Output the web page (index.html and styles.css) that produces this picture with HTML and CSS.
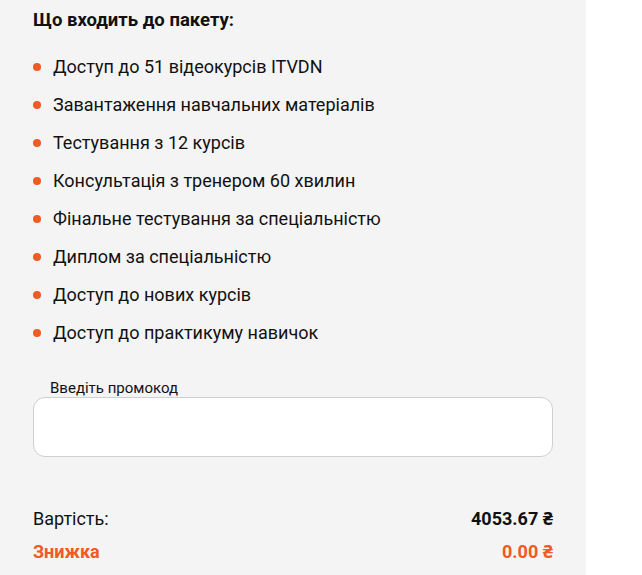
FILE: index.html
```html
<!DOCTYPE html>
<html lang="uk">
<head>
<meta charset="utf-8">
<link rel="stylesheet" href="styles.css">
</head>
<body>
<div class="panel">
  <h3 class="title">Що входить до пакету:</h3>
  <ul class="features">
    <li>Доступ до 51 відеокурсів ITVDN</li>
    <li>Завантаження навчальних матеріалів</li>
    <li>Тестування з 12 курсів</li>
    <li>Консультація з тренером 60 хвилин</li>
    <li>Фінальне тестування за спеціальністю</li>
    <li>Диплом за спеціальністю</li>
    <li>Доступ до нових курсів</li>
    <li>Доступ до практикуму навичок</li>
  </ul>
  <label class="promo">
    <span class="promo-label">Введіть промокод</span>
    <input class="promo-input" type="text">
  </label>
  <div class="totals">
    <div class="row"><span>Вартість:</span><span class="val">4053.67 ₴</span></div>
    <div class="row discount"><span>Знижка</span><span class="val">0.00 ₴</span></div>
  </div>
</div>
</body>
</html>
```
FILE: styles.css
```css
html, body {
  margin: 0;
  padding: 0;
  background: #fff;
  font-family: Roboto, "Noto Sans", sans-serif;
  color: #111;
}
.panel {
  width: 520px;
  min-height: 575px;
  background: #f4f4f4;
  padding: 8px 33px 0 33px;
  box-sizing: content-box;
}
.title {
  margin: 0;
  font-size: 18.5px;
  font-weight: 700;
  line-height: 24px;
}
.features {
  list-style: none;
  margin: 16px 0 0 0;
  padding: 0;
}
.features li {
  display: flex;
  align-items: center;
  gap: 12px;
  font-size: 18px;
  line-height: 20px;
  height: 38px;
}
.features li::before {
  content: "";
  width: 8px;
  height: 8px;
  border-radius: 50%;
  background: #f05a24;
  flex: none;
}
.promo {
  display: flex;
  flex-direction: column;
  margin-top: 27px;
}
.promo-label {
  font-size: 15px;
  line-height: 18px;
  padding-left: 17px;
}
.promo-input {
  height: 60px;
  box-sizing: border-box;
  border: 1px solid #cfcfcf;
  border-radius: 12px;
  background: #fff;
  margin: 0;
}
.totals {
  margin-top: 51px;
  display: flex;
  flex-direction: column;
  gap: 12px;
}
.row {
  display: flex;
  justify-content: space-between;
  font-size: 18px;
  line-height: 21px;
}
.row .val {
  font-weight: 700;
}
.discount {
  color: #f05a24;
  font-weight: 700;
}
```
